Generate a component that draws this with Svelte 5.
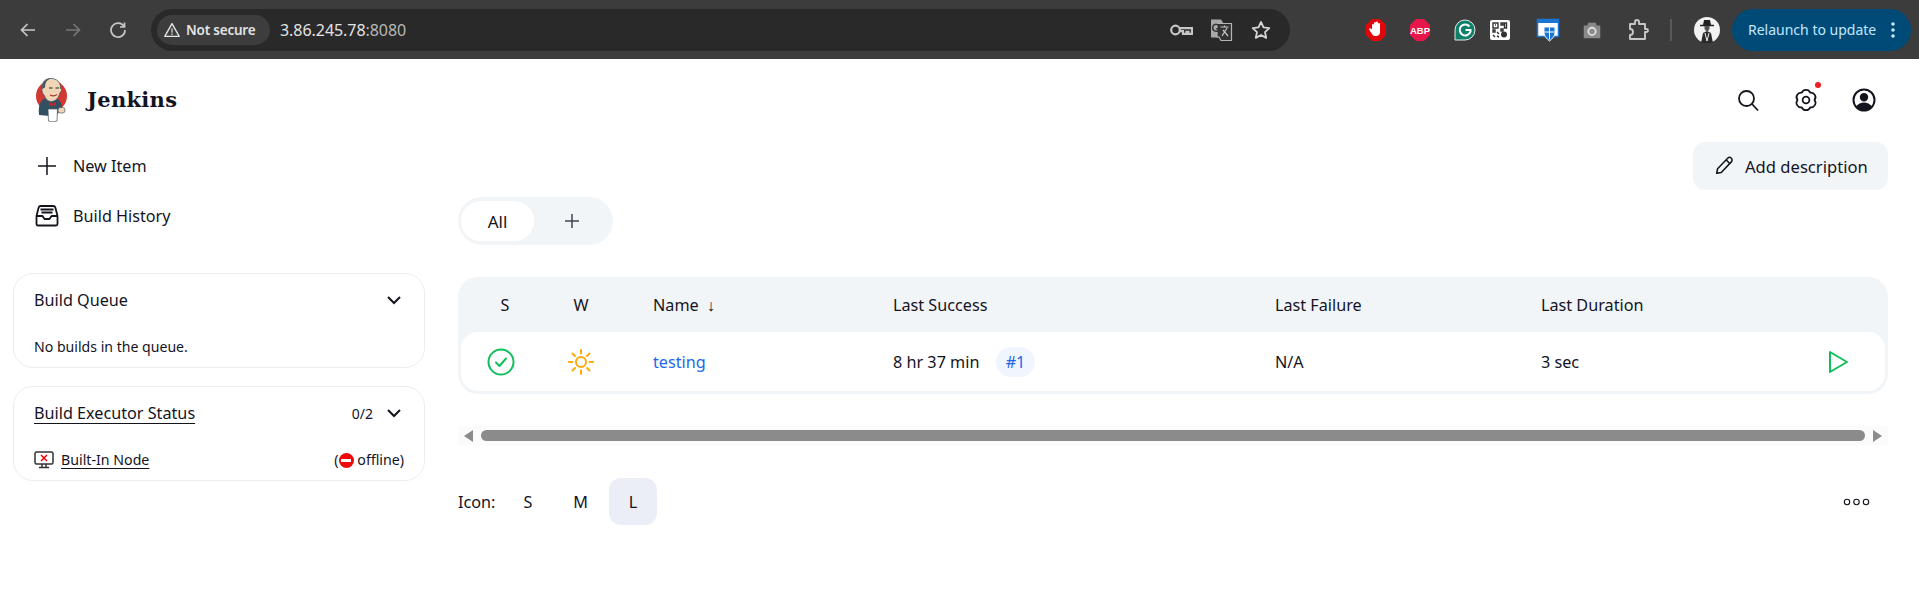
<script>
  const columns = ['S', 'W', 'Name', 'Last Success', 'Last Failure', 'Last Duration', ''];
</script>

<div class="page">
  <div class="chrome">
    <div class="nav">
      <svg class="navicon" viewBox="0 0 20 20"><path d="M17 10H4M9.5 4 3.5 10l6 6" /></svg>
      <svg class="navicon dim" viewBox="0 0 20 20"><path d="M3 10h13M10.500 4l6 6-6 6" /></svg>
      <svg class="navicon" viewBox="0 0 20 20"><path d="M16 6.500A7 7 0 1 0 17 10M16.500 2.500v4.500H12" /></svg>
    </div>
    <div class="omnibox">
      <div class="chip">
        <svg viewBox="0 0 20 20" width="18" height="18"><path d="M10 3 2 17h16Z" fill="none" stroke="#e6e6e6" stroke-width="1.500" stroke-linejoin="round"/><path d="M10 8v5M10 14v1.500" stroke="#e6e6e6" stroke-width="1.300"/></svg>
        <span>Not secure</span>
      </div>
      <span class="url">3.86.245.78<span class="port">:8080</span></span>
      <div class="omni-right">
        <svg viewBox="0 0 24 24" width="24" height="24" fill="none" stroke="#c7c7c7" stroke-width="2.200"><circle cx="6.500" cy="12" r="4.300"/><path d="M11 10.200h12v5.600h-3.500v-2h-2v2H14v-2.600h-3"/></svg>
        <svg viewBox="0 0 24 24" width="24" height="24"><path d="M2 1.500h10l2 3v15H2Z" fill="#a8a8a8"/><path d="M8 5.500h14.500v17H12L10 19H8Z" fill="#333" stroke="#b5b5b5" stroke-width="1.200"/><path d="M11.500 9h8M15.500 7.500V9M13 18l5-8M14 12l5 6" stroke="#c7c7c7" stroke-width="1.200" fill="none"/><path d="M9.800 7.500a3.500 3.500 0 1 0 .700 3.200H7.200" stroke="#333" fill="none" stroke-width="1.500"/></svg>
        <svg viewBox="0 0 24 24" width="24" height="24"><path d="m12 4 2.500 5.400 5.800.7-4.300 4 1.200 5.800-5.200-2.900-5.200 2.900 1.200-5.800-4.300-4 5.800-.7Z" fill="none" stroke="#d6d6d6" stroke-width="1.800" stroke-linejoin="round"/></svg>
      </div>
    </div>
    <div class="exts">
      <svg class="e1" viewBox="0 0 22 24" width="22" height="24"><path d="M7 1h8l6 6v10l-6 6H7l-6-6V7Z" fill="#e0060c"/><path d="M7 11V7a1 1 0 0 1 2 0V5a1 1 0 0 1 2 0v-.500a1 1 0 0 1 2 0V6a1 1 0 0 1 2 0v8a4 4 0 0 1-4 4h-1c-2 0-3-2-5-5l-.800-1.500c-.500-1 .800-1.500 1.500-.800Z" fill="#fff"/></svg>
      <svg class="e2" viewBox="0 0 22 24" width="22" height="24"><path d="M7 1h8l6 6v10l-6 6H7l-6-6V7Z" fill="#e8174b"/><text x="11" y="15.500" text-anchor="middle" class="abp">ABP</text></svg>
      <svg class="e3" viewBox="0 0 22 24" width="22" height="24"><path d="M11 2a10 10 0 1 1 0 20H1V12A10 10 0 0 1 11 2Z" fill="#0d8069" stroke="#e9e9e9" stroke-width="1"/><path d="M15.500 8.500a5.500 5.500 0 1 0 1 5v-1.500h-5" fill="none" stroke="#fff" stroke-width="2"/></svg>
      <svg class="e4" viewBox="0 0 22 24" width="22" height="24"><rect x="1" y="2" width="20" height="20" rx="2" fill="#fff"/><path d="M4 5h5v5H4ZM6 7h1M12 5h2v2h-2ZM15.500 5h2v5h-2ZM4 12h2v2H4ZM8 14l2 2M4 17l2 2M8 18l2 1M12 11h2v2h-2Z" fill="none" stroke="#333" stroke-width="1.400"/><circle cx="15" cy="16.500" r="3" fill="#333"/></svg>
      <svg class="e5" viewBox="0 0 24 24" width="24" height="24"><rect x="1.500" y="1.500" width="21" height="17" fill="#fff" stroke="#1976d2" stroke-width="1.500"/><path d="M2 2h20v3H2Z" fill="#1976d2"/><path d="M8 9h11v6c0 3-3 6-5.500 8C11 21 8 18 8 15Z" fill="#1976d2" stroke="#fff"/><path d="M13.500 9.500v12M8.500 14h10" stroke="#fff" stroke-width="1"/></svg>
      <svg class="e6" viewBox="0 0 24 24" width="22" height="22"><path d="M3 7h4l1-3h8l1 3h4v14H3Z" fill="#8a8a8a"/><circle cx="12" cy="13.500" r="4" fill="#8a8a8a" stroke="#ddd" stroke-width="2"/></svg>
      <svg class="e7" viewBox="0 0 24 24" width="24" height="24"><path d="M4 6h5V4a2 2 0 0 1 4 0v2h6v5h1.500a1.500 1.500 0 0 1 0 3H19v7H4v-4a3 3 0 0 0 0-6Z" fill="none" stroke="#c7c7c7" stroke-width="1.900" stroke-linejoin="round"/></svg>
      <span class="divider"></span>
      <svg class="avatar" viewBox="0 0 26 26" width="26" height="26"><circle cx="13" cy="13" r="13" fill="#f2f2f2"/><path d="M9 8h8l-1-5h-6Z" fill="#222"/><path d="M6 8.500h14" stroke="#222" stroke-width="1.500"/><path d="M10.500 9h5v3l-1.500 2h-2l-1.500-2Z" fill="#555"/><path d="M7 26l2-10 4-2 4 2 2 10Z" fill="#2a2a2a"/><path d="M11 16l2 8 2-8" stroke="#eee" fill="none"/></svg>
    </div>
    <div class="relaunch">
      <span>Relaunch to update</span>
      <svg viewBox="0 0 4 18" width="4" height="18"><circle cx="2" cy="3" r="1.800"/><circle cx="2" cy="9" r="1.800"/><circle cx="2" cy="15" r="1.800"/></svg>
    </div>
  </div>

  <header class="header">
    <div class="brand">
      <svg class="logo" viewBox="0 0 32 44" width="32" height="44">
        <circle cx="16.500" cy="18" r="15.500" fill="#d33833"/>
        <path d="M4 37c-1-9 1-14 6-17l11 0c4 2 6 6 6 10l-5 7-7 1Z" fill="#335061"/>
        <path d="M7 10C7 3 11 .500 16 .500s10 3 9.500 10c1.500 0 1.500 3-.500 4-1 5-4.500 9-8.500 9-3 0-6-2-7-6-2-1-3-5-2.500-7.500Z" fill="#f0d6b7" stroke="#49585f" stroke-width=".800"/>
        <path d="M7 11C7 3 11 .500 16 .500c-4 1-6 4-6 9Z" fill="#49585f"/>
        <path d="M14 10h3.500M20.500 10H24" stroke="#222" stroke-width="1.100"/>
        <path d="M15 17c2 1 5 1 7-.500" stroke="#a33" fill="none" stroke-width="1.100"/>
        <path d="M14 24l3.500 1.500L21 24v4l-3.500-1L14 28Z" fill="#c8202a"/>
        <path d="M13 31h9.500l-.500 12c-3 1-6 1-8.500 0Z" fill="#fff" stroke="#49585f" stroke-width=".700"/>
        <rect x="23" y="29.500" width="7" height="5.500" rx="2.500" fill="#f0d6b7" stroke="#49585f" stroke-width=".700"/>
      </svg>
      <span class="wordmark">Jenkins</span>
    </div>
    <div class="actions">
      <svg class="act" viewBox="0 0 24 24" width="24" height="24"><circle cx="10.500" cy="10.500" r="7.500"/><path d="m16 16 6 6.500"/></svg>
      <span class="gear">
        <svg class="act" viewBox="0 0 24 24" width="24" height="24"><circle cx="12" cy="12" r="3.400"/><path d="M7.750 4.640A4.600 4.600 0 0 1 16.250 4.640 4.600 4.600 0 0 1 20.500 12 4.600 4.600 0 0 1 16.250 19.360 4.600 4.600 0 0 1 7.750 19.360 4.600 4.600 0 0 1 3.500 12 4.600 4.600 0 0 1 7.750 4.640Z" stroke-linejoin="round"/></svg>
        <span class="reddot"></span>
      </span>
      <svg class="act" viewBox="0 0 24 24" width="24" height="24"><circle cx="12" cy="12" r="10.500" stroke-width="2"/><circle cx="12" cy="9.300" r="3.300" fill="#14141f"/><path d="M4.800 19c2-2.500 4.200-3.500 7.200-3.500s5.200 1 7.200 3.500A10.500 10.500 0 0 1 4.800 19Z" fill="#14141f"/></svg>
    </div>
  </header>

  <div class="content">
    <aside class="side">
      <a class="task">
        <svg class="task-ic" viewBox="0 0 24 24" width="24" height="24"><path d="M12 3v18M3 12h18"/></svg>
        <span>New Item</span>
      </a>
      <a class="task">
        <svg class="task-ic box" viewBox="0 0 24 24" width="24" height="24"><path d="M5.500 5.500h13M6.500 8.500h11M1.500 12 3.500 4a2.500 2.500 0 0 1 2.500-2h12a2.500 2.500 0 0 1 2.500 2l2 8v8a1.500 1.500 0 0 1-1.500 1.500H3A1.500 1.500 0 0 1 1.500 20Z M1.500 12h6l2 3h5l2-3h6"/></svg>
        <span>Build History</span>
      </a>

      <section class="card first">
        <div class="card-head">
          <h2>Build Queue</h2>
          <svg class="chev" viewBox="0 0 16 10" width="16" height="10"><path d="m2 2 6 6 6-6"/></svg>
        </div>
        <p>No builds in the queue.</p>
      </section>

      <section class="card">
        <div class="card-head">
          <h2 class="ul">Build Executor Status</h2>
          <span class="count">0/2</span>
          <svg class="chev" viewBox="0 0 16 10" width="16" height="10"><path d="m2 2 6 6 6-6"/></svg>
        </div>
        <div class="node">
          <svg viewBox="0 0 20 18" width="20" height="18"><rect x="1" y="1" width="18" height="12" rx="1.500" fill="#fff" stroke="#333" stroke-width="1.500"/><path d="m7 4 6 6m0-6-6 6" stroke="#e00" stroke-width="1.500"/><path d="M8 13v3M12 13v3M5 16.500h10" stroke="#333" stroke-width="1.500"/></svg>
          <span class="node-name">Built-In Node</span>
          <span class="offline">(<span class="stop"><i></i></span> offline)</span>
        </div>
      </section>
    </aside>

    <main class="main">
      <div class="top">
        <button class="desc">
          <svg viewBox="0 0 24 24" width="22" height="22" fill="none" stroke="#14141f" stroke-width="1.700" stroke-linejoin="round"><path d="M4 20l1-5L16 3.500c1.200-1.200 3-1 4 0s1.200 2.800 0 4L9 19Z M14.500 5.500l4 4"/></svg>
          <span>Add description</span>
        </button>
      </div>

      <div class="tabs">
        <span class="tab active">All</span>
        <svg class="plus" viewBox="0 0 16 16" width="16" height="16"><path d="M8 1v14M1 8h14"/></svg>
      </div>

      <div class="table">
        <div class="cols head">
          {#each columns as c}
            <div class="th">{#if c === 'Name'}Name <span class="arrow">↓</span>{:else}{c}{/if}</div>
          {/each}
        </div>
        <div class="cols row">
          <div class="td ic s">
            <svg viewBox="0 0 28 28" width="28" height="28" fill="none" stroke="#12bf5c" stroke-width="2"><circle cx="14" cy="14" r="12.500"/><path d="m9 14.500 3.500 3.500L19 10.500" stroke-linecap="round" stroke-linejoin="round"/></svg>
          </div>
          <div class="td ic">
            <svg viewBox="0 0 28 28" width="28" height="28" fill="none" stroke="#ffa90a" stroke-width="2" stroke-linecap="round"><circle cx="14" cy="14" r="5"/><path d="M14 2v3.500M14 22.500V26M2 14h3.500M22.500 14H26M5.500 5.500 8 8M20 20l2.500 2.500M22.500 5.500 20 8M8 20l-2.500 2.500"/></svg>
          </div>
          <div class="td name"><a class="link">testing</a></div>
          <div class="td">8 hr 37 min <span class="badge">#1</span></div>
          <div class="td">N/A</div>
          <div class="td">3 sec</div>
          <div class="td play">
            <svg viewBox="0 0 21 24" width="21" height="24"><path d="M2 2 19 12 2 22Z" fill="none" stroke="#12bf5c" stroke-width="2" stroke-linejoin="round"/></svg>
          </div>
        </div>
      </div>

      <div class="scroll">
        <span class="tri left"></span>
        <span class="thumb"></span>
        <span class="tri right"></span>
      </div>

      <div class="foot">
        <span class="icon-label">Icon:</span>
        <span class="size">S</span>
        <span class="size">M</span>
        <span class="size on">L</span>
        <svg class="more" viewBox="0 0 27 8" width="27" height="8"><circle cx="4" cy="4" r="2.700"/><circle cx="13.500" cy="4" r="2.700"/><circle cx="23" cy="4" r="2.700"/></svg>
      </div>
    </main>
  </div>
</div>

<style>
  :global(body) {
    margin: 0;
    background: #fff;
    overflow: hidden;
  }
  .page {
    width: 1919px;
    height: 611px;
    overflow: hidden;
    font-family: "Noto Sans", "Open Sans", sans-serif;
    font-size: 16.200px;
    color: #14141f;
  }

  .chrome {
    height: 59px;
    box-sizing: border-box;
    background: #3c3c3c;
    display: flex;
    align-items: center;
    padding-left: 18px;
  }
  .nav {
    display: flex;
    gap: 25px;
    width: 133px;
    flex: none;
  }
  .navicon {
    width: 20px;
    height: 20px;
    fill: none;
    stroke: #c7c7c7;
    stroke-width: 1.700;
  }
  .navicon.dim {
    stroke: #777;
  }
  .omnibox {
    width: 1139px;
    height: 42px;
    flex: none;
    box-sizing: border-box;
    background: #292929;
    border-radius: 21px;
    display: flex;
    align-items: center;
    padding-left: 6px;
  }
  .chip {
    height: 30px;
    width: 113px;
    box-sizing: border-box;
    background: #3d3d3d;
    border-radius: 15px;
    display: flex;
    align-items: center;
    gap: 5px;
    padding-left: 6px;
    color: #e3e3e3;
    font-size: 13.500px;
    font-weight: 600;
    letter-spacing: -0.2px;
    white-space: nowrap;
  }
  .url {
    margin-left: 10px;
    color: #e3e3e3;
    font-size: 16px;
    letter-spacing: -0.05px;
  }
  .port {
    color: #b8b8b8;
  }
  .omni-right {
    margin-left: auto;
    display: flex;
    gap: 16px;
    padding-right: 17px;
  }
  .exts {
    display: flex;
    align-items: center;
    margin-left: 75px;
    flex: none;
    width: 367px;
  }
  .exts svg {
    flex: none;
  }
  .e2, .e3, .e4, .e5, .e6, .e7 {
    margin-left: 22px;
  }
  .e3 { margin-left: 23px; }
  .e4 { margin-left: 13px; }
  .e5 { margin-left: 25px; }
  .e6 { margin-left: 21px; }
  .e7 { margin-left: 23px; }
  .abp {
    font: 700 9.500px "Liberation Sans", sans-serif;
    fill: #fff;
  }
  .divider {
    width: 2px;
    height: 22px;
    background: #5a5a5a;
    margin-left: 20px;
  }
  .avatar {
    margin-left: 22px;
  }
  .relaunch {
    width: 179px;
    height: 42px;
    flex: none;
    box-sizing: border-box;
    background: #004a77;
    border-radius: 21px;
    display: flex;
    align-items: center;
    justify-content: space-between;
    padding: 0 16px;
    color: #c2e7ff;
    fill: #c2e7ff;
    font-size: 14px;
    white-space: nowrap;
  }

  .header {
    height: 82px;
    display: flex;
    align-items: center;
    justify-content: space-between;
    padding: 0 43px 0 35px;
  }
  .brand {
    display: flex;
    align-items: center;
    gap: 20px;
  }
  .wordmark {
    font-family: "DejaVu Serif", "Liberation Serif", serif;
    font-weight: 700;
    font-size: 21px;
    letter-spacing: 0.3px;
    margin-top: -2px;
  }
  .actions {
    display: flex;
    align-items: center;
    gap: 34px;
  }
  .act {
    display: block;
    fill: none;
    stroke: #14141f;
    stroke-width: 1.800;
  }
  .gear {
    position: relative;
    display: block;
  }
  .reddot {
    position: absolute;
    top: -6px;
    right: -3px;
    width: 6px;
    height: 6px;
    border-radius: 50%;
    background: #f21c1c;
  }

  .content {
    display: flex;
  }
  .side {
    width: 412px;
    flex: none;
    margin-left: 13px;
  }
  .task {
    height: 50px;
    display: flex;
    align-items: center;
    gap: 14px;
    padding-left: 22px;
  }
  .task-ic {
    fill: none;
    stroke: #14141f;
    stroke-width: 1.500;
    stroke-linejoin: round;
    flex: none;
  }
  .task-ic.box {
    stroke-width: 1.800;
  }
  .card {
    box-sizing: border-box;
    height: 95px;
    margin-top: 18px;
    border: 1.500px solid #e9edf2;
    border-radius: 20px;
    padding: 0 19px 0 20px;
    display: flex;
    flex-direction: column;
  }
  .card.first {
    margin-top: 32px;
  }
  .card-head {
    height: 52px;
    display: flex;
    align-items: center;
    gap: 13px;
  }
  .card-head h2 {
    margin: 0 auto 0 0;
    font-size: inherit;
    font-weight: 400;
  }
  .card-head .ul {
    text-decoration: underline;
    text-underline-offset: 4px;
    text-decoration-thickness: 1px;
  }
  .count {
    font-size: 14px;
  }
  .chev {
    fill: none;
    stroke: #14141f;
    stroke-width: 2;
    margin-right: 3px;
  }
  .card p {
    margin: 11px 0 0;
    font-size: 14.100px;
    line-height: 20px;
  }
  .node {
    margin-top: 11px;
    display: flex;
    align-items: center;
    gap: 7px;
    font-size: 14.200px;
    line-height: 20px;
  }
  .node-name {
    text-decoration: underline;
    text-underline-offset: 3px;
    text-decoration-thickness: 1px;
  }
  .offline {
    margin-left: auto;
    margin-right: 1px;
    display: flex;
    align-items: center;
    white-space: pre;
  }
  .stop {
    width: 15px;
    height: 15px;
    border-radius: 50%;
    background: #ee0a0a;
    display: flex;
    align-items: center;
    justify-content: center;
  }
  .stop i {
    width: 10px;
    height: 3px;
    background: #fff;
  }

  .main {
    margin-left: 33px;
    width: 1430px;
    flex: none;
  }
  .top {
    display: flex;
    justify-content: flex-end;
    padding-top: 1px;
  }
  .desc {
    width: 195px;
    height: 48px;
    border: none;
    border-radius: 12px;
    background: #f2f5f8;
    color: inherit;
    font: inherit;
    font-size: 16.600px;
    display: flex;
    align-items: center;
    gap: 10px;
    padding: 0 0 0 20px;
  }
  .tabs {
    margin-top: 7px;
    width: 155px;
    height: 48px;
    box-sizing: border-box;
    background: #f2f5f8;
    border-radius: 24px;
    padding: 4px 3px;
    display: flex;
    align-items: center;
  }
  .tab.active {
    width: 73px;
    height: 40px;
    background: #fff;
    border-radius: 20px;
    display: flex;
    align-items: center;
    justify-content: center;
    font-size: 17px;
  }
  .plus {
    margin-left: 30px;
    fill: none;
    stroke: #3f4450;
    stroke-width: 1.500;
  }
  .table {
    margin-top: 32px;
    height: 117px;
    box-sizing: border-box;
    background: #f2f5f8;
    border-radius: 20px;
    padding: 0 3px 3px;
  }
  .cols {
    display: grid;
    grid-template-columns: 88px 64px 280px 382px 266px 1fr 70px;
    align-items: center;
  }
  .head {
    height: 55px;
  }
  .row {
    height: 59px;
    background: #fff;
    border-radius: 17px;
  }
  .th:nth-child(1), .th:nth-child(2) {
    text-align: center;
  }
  .th:nth-child(3), .name {
    padding-left: 40px;
  }
  .arrow {
    margin-left: 4px;
  }
  .ic {
    display: flex;
    justify-content: center;
  }
  .ic.s {
    padding-right: 8px;
  }
  .ic svg, .play svg {
    display: block;
  }
  .link {
    color: #2169e8;
  }
  .badge {
    display: inline-block;
    margin-left: 12px;
    padding: 0 10px;
    line-height: 30px;
    border-radius: 15px;
    background: #f1f5fd;
    color: #2169e8;
  }
  .play {
    display: flex;
    justify-content: flex-end;
    padding-right: 36px;
  }
  .scroll {
    margin-top: 32px;
    height: 19px;
    background: #fbfbfb;
    display: flex;
    align-items: center;
    padding: 0 6px;
  }
  .thumb {
    flex: 1;
    height: 11px;
    margin: 0 8px;
    border-radius: 6px;
    background: #8b8b8b;
  }
  .tri {
    width: 0;
    height: 0;
    border-top: 6px solid transparent;
    border-bottom: 6px solid transparent;
  }
  .tri.left {
    border-right: 9px solid #8b8b8b;
  }
  .tri.right {
    border-left: 9px solid #8b8b8b;
  }
  .foot {
    margin-top: 33px;
    height: 47px;
    display: flex;
    align-items: center;
  }
  .icon-label {
    width: 46px;
  }
  .size {
    width: 48px;
    height: 47px;
    margin-right: 4.500px;
    display: flex;
    align-items: center;
    justify-content: center;
    border-radius: 12px;
  }
  .size.on {
    background: #ebeef6;
  }
  .more {
    margin-left: auto;
    margin-right: 18px;
    fill: none;
    stroke: #14141f;
    stroke-width: 1.100;
  }
</style>
